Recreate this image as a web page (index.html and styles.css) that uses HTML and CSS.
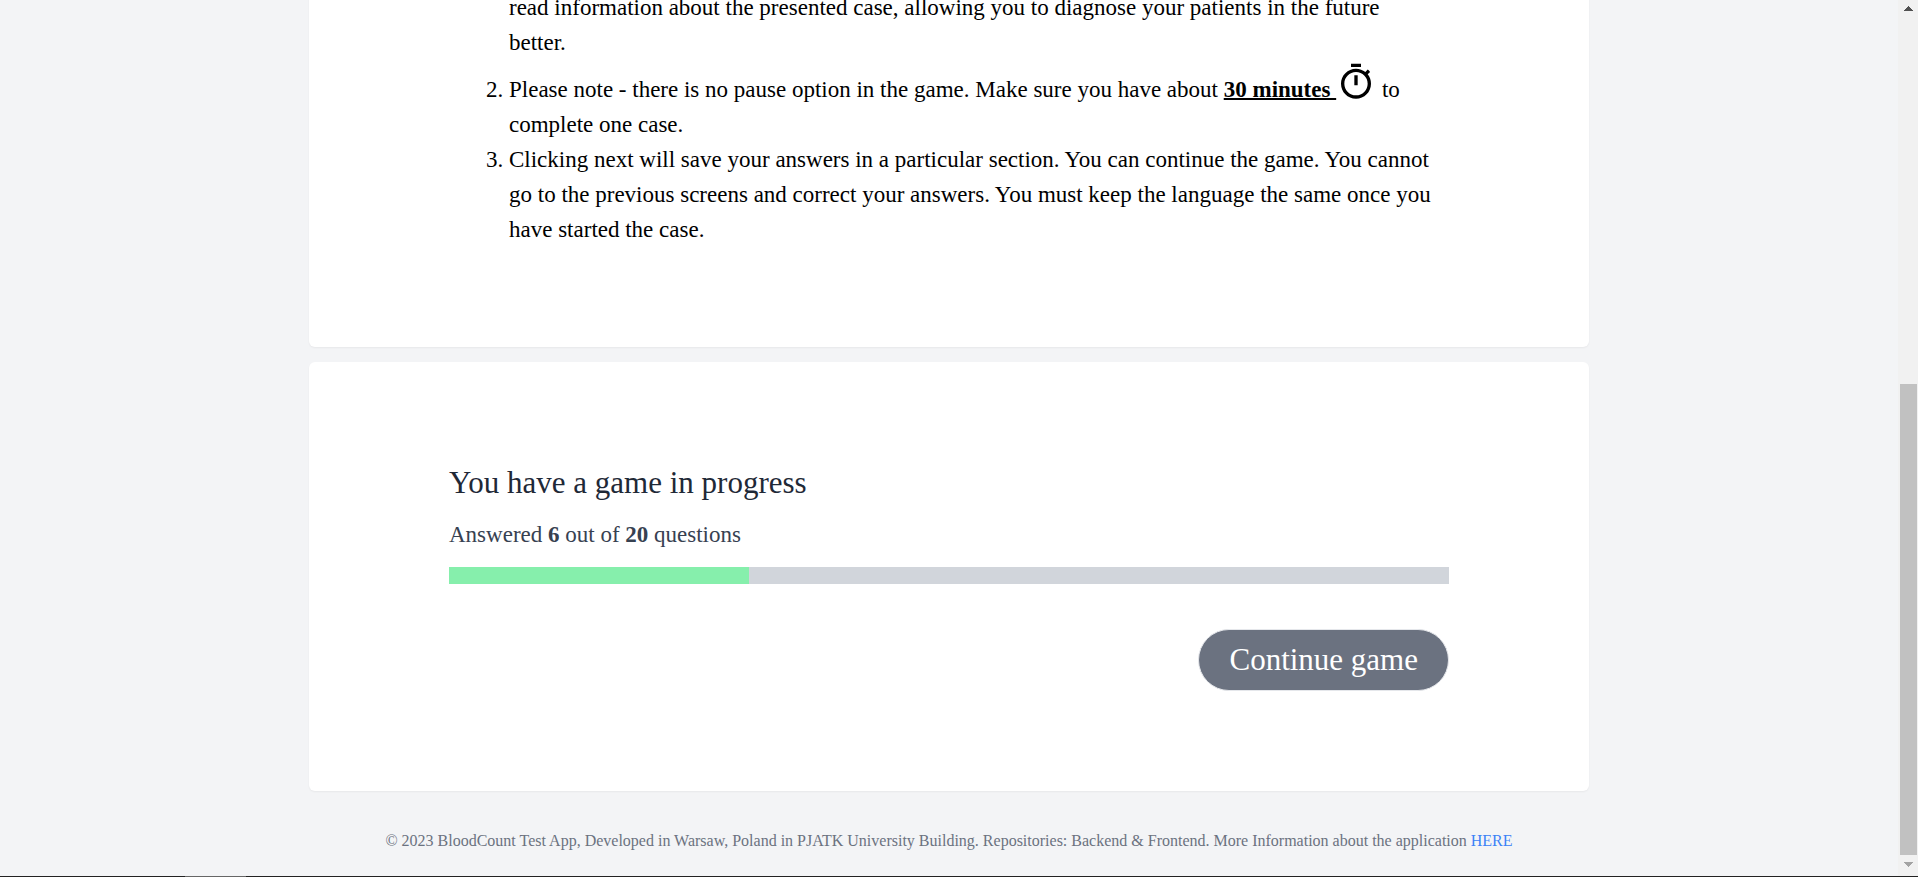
FILE: index.html
```html
<!DOCTYPE html>
<html lang="en">
<head>
<meta charset="utf-8">
<title>BloodCount Test App</title>
<link rel="stylesheet" href="styles.css">
</head>
<body>
<div class="window">
  <div class="page">
    <main class="content">
      <section class="card rules">
        <ol class="rules-list" start="1">
          <li class="unmarked">read information about the presented case, allowing you to diagnose your patients in the future better.</li>
          <li>Please note - there is no pause option in the game. Make sure you have about <strong class="time">30 minutes&nbsp;</strong><svg class="timer" viewBox="0 0 24 24" aria-hidden="true"><path d="M15 1H9v2h6V1zm-4 13h2V8h-2v6zm8.03-6.61 1.42-1.42c-.43-.51-.9-.99-1.41-1.41l-1.42 1.42C16.07 4.74 14.12 4 12 4c-4.97 0-9 4.03-9 9s4.02 9 9 9 9-4.03 9-9c0-2.12-.74-4.07-1.97-5.61zM12 20c-3.87 0-7-3.13-7-7s3.13-7 7-7 7 3.13 7 7-3.13 7-7 7z"/></svg> to complete one case.</li>
          <li>Clicking next will save your answers in a particular section. You can continue the game. You cannot go to the previous screens and correct your answers. You must keep the language the same once you have started the case.</li>
        </ol>
      </section>
      <section class="card game">
        <h2 class="title">You have a game in progress</h2>
        <p class="answered">Answered <b>6</b> out of <b>20</b> questions</p>
        <div class="progress" role="progressbar" aria-label="Answered questions" aria-valuemin="0" aria-valuemax="20" aria-valuenow="6"><div class="progress-fill" style="width:30%"></div></div>
        <button class="continue" type="button">Continue game</button>
      </section>
    </main>
    <footer class="footer">© 2023 BloodCount Test App, Developed in Warsaw, Poland in PJATK University Building. Repositories: <a href="#">Backend</a> &amp; <a href="#">Frontend</a>. More Information about the application <a class="here" href="#">HERE</a></footer>
  </div>
  <div class="scrollbar" aria-hidden="true">
    <svg class="arrow" viewBox="0 0 9 5"><path fill="#505050" d="M4 0h1v1h1v1h1v1h1v1h1v1H0V4h1V3h1V2h1V1h1z"/></svg>
    <div class="track"><div class="thumb"></div></div>
    <svg class="arrow" viewBox="0 0 9 5"><path fill="#a3a3a3" d="M4 5h1V4h1V3h1V2h1V1h1V0H0v1h1v1h1v1h1v1h1z"/></svg>
  </div>
</div>
<div class="taskbar"><div class="task"></div></div>
</body>
</html>
```
FILE: styles.css
```css
* { box-sizing: border-box; }
body {
  margin: 0;
  height: 100vh;
  display: flex;
  flex-direction: column;
  overflow: hidden;
  background: #f3f4f6;
  font-family: "Liberation Serif", "Times New Roman", serif;
  color: #000;
}
.window { flex: 1; min-height: 0; display: flex; }
/* The page is scrolled to its end, so its content sits on the bottom edge. */
.page {
  flex: 1;
  display: flex;
  flex-direction: column;
  justify-content: flex-end;
  overflow: hidden;
}
.content {
  width: 100%;
  max-width: 1280px;
  margin: 0 auto;
  display: flex;
  flex-direction: column;
  gap: 15px;
}
.card {
  background: #fff;
  border-radius: 6px;
  box-shadow: 0 1px 2px rgba(0, 0, 0, 0.05);
  padding: 100px 140px;
}
.rules { padding-top: 0; }
.rules-list {
  margin: 0;
  padding: 0 12px 0 60px;
  font-size: 23px;
  line-height: 35px;
}
.unmarked { list-style: none; }
.time {
  text-decoration: underline;
  text-decoration-thickness: 2px;
}
.timer {
  width: 40px;
  height: 40px;
  margin-top: 2px;
  vertical-align: -5px;
  fill: #000;
}
.title {
  margin: 0 0 13px;
  font-size: 31px;
  line-height: 42px;
  font-weight: 400;
  color: #1f2937;
}
.answered {
  margin: 0 0 14px;
  font-size: 23px;
  line-height: 36px;
  color: #374151;
}
.progress { height: 17px; background: #d1d5db; }
.progress-fill { height: 100%; background: #86efac; }
.continue {
  display: block;
  margin: 45px 0 0 auto;
  padding: 12px 30px;
  border: 1px solid #e5e7eb;
  border-radius: 32px;
  background: #6b7280;
  color: #fff;
  font: 31px/36px "Liberation Serif", "Times New Roman", serif;
}
.footer {
  padding: 40px 20px 25px;
  text-align: center;
  font-size: 16px;
  line-height: 20px;
  color: #6b7280;
}
.footer a { color: inherit; text-decoration: none; }
.footer .here { color: #3b82f6; }
.scrollbar {
  width: 20px;
  padding: 6px 1px 9px 2px;
  display: flex;
  flex-direction: column;
  align-items: center;
  background: #f1f1f1;
}
.arrow { width: 9px; height: 5px; }
.track {
  flex: 1;
  align-self: stretch;
  margin: 6px 0 7px;
  display: flex;
  flex-direction: column;
  justify-content: flex-end;
}
.thumb { height: 56.2%; background: #c1c1c1; }
.taskbar { height: 1px; padding-left: 185px; background: #222; }
.task { width: 61px; height: 1px; background: #666; }
```
